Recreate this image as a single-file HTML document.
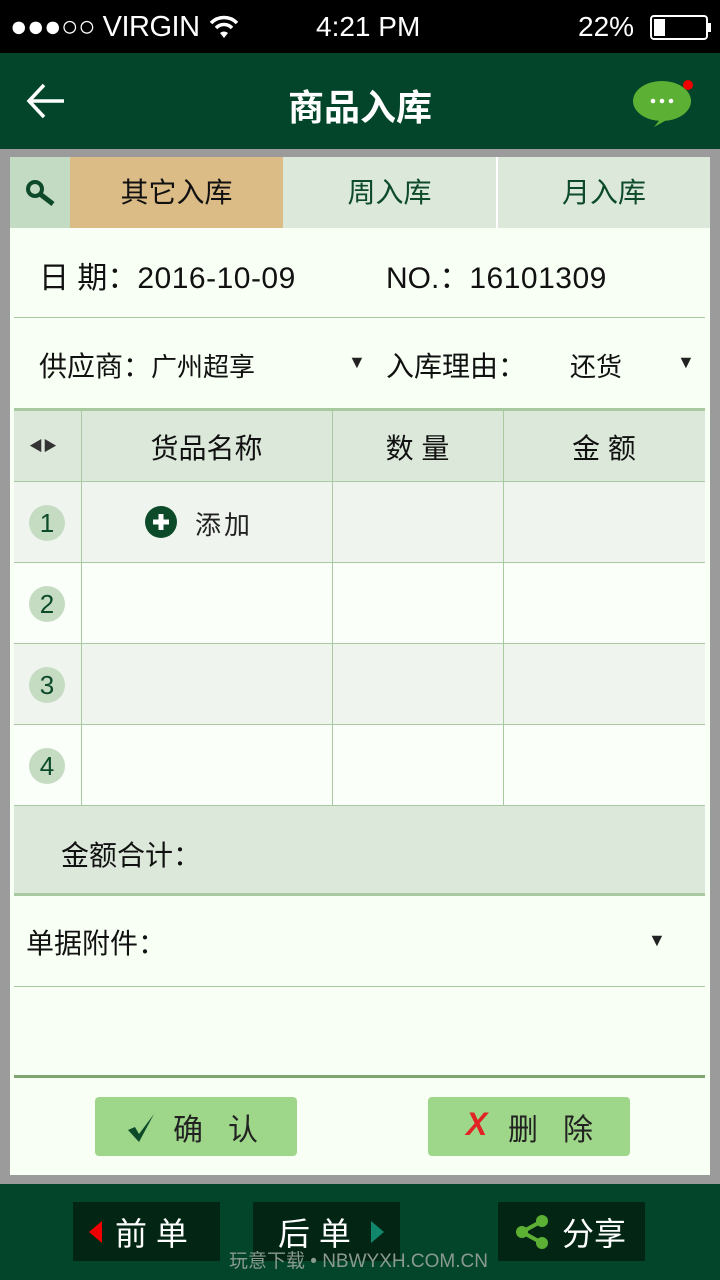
<!DOCTYPE html>
<html><head><meta charset="utf-8"><style>
*{margin:0;padding:0;box-sizing:border-box}
body{width:720px;height:1280px;background:#9b9b9b;font-family:"Liberation Sans","Noto Sans CJK SC",sans-serif;position:relative;overflow:hidden}
.a{position:absolute}
.sb{left:0;top:0;width:720px;height:53px;background:#000;color:#fff;font-size:28px}
.nav{left:0;top:53px;width:720px;height:96px;background:#02452a}
.panel{left:10px;top:157px;width:700px;height:1018px;background:#f8fff4}
.t{font-size:28px;color:#111}
.hl{background:#a9c9a0;height:1px}
.vl{background:#a9c9a0;width:1px}
.num{width:36px;height:36px;border-radius:50%;background:#c5dcc3;color:#0d4a2a;font-size:26px;text-align:center;line-height:36px}
.btn{background:#9fd78a;border-radius:4px;height:59px;width:202px;font-size:30px;color:#222}
.bb{background:#022514;height:59px;width:147px;color:#fff;font-size:32px}
</style></head><body>
<div class="a sb">
 <div class="a" style="left:10px;top:11px;font-size:29px;letter-spacing:-0.5px">●●●○○ VIRGIN</div>
 <svg class="a" style="left:208px;top:14px" width="32" height="26" viewBox="0 0 32 26"><path d="M3 9 A18 18 0 0 1 29 9" stroke="#fff" stroke-width="3.5" fill="none"/><path d="M8 14 A11 11 0 0 1 24 14" stroke="#fff" stroke-width="3.5" fill="none"/><path d="M12 19 L16 24 L20 19 A6 6 0 0 0 12 19Z" fill="#fff"/></svg>
 <div class="a" style="left:316px;top:11px">4:21 PM</div>
 <div class="a" style="left:578px;top:11px">22%</div>
 <div class="a" style="left:650px;top:15px;width:58px;height:25px;border:2px solid #fff;border-radius:4px"><div style="width:11px;height:17px;background:#fff;margin:2px"></div></div>
 <div class="a" style="left:708px;top:23px;width:3px;height:9px;background:#fff"></div>
</div>
<div class="a nav">
 <svg class="a" style="left:26px;top:30px" width="40" height="36" viewBox="0 0 40 36"><path d="M18 2 L3 18 L18 34 M3 18 H38" stroke="#fff" stroke-width="3.5" fill="none"/></svg>
 <div class="a" style="left:0;width:720px;top:26px;text-align:center;color:#fff;font-size:36px;font-weight:bold">商品入库</div>
 <svg class="a" style="left:632px;top:24px" width="62" height="50" viewBox="0 0 62 50"><ellipse cx="30" cy="24" rx="29" ry="20" fill="#5cb135"/><path d="M30 40 L22 50 L40 40Z" fill="#5cb135"/><circle cx="21" cy="24" r="2.3" fill="#fff"/><circle cx="30" cy="24" r="2.3" fill="#fff"/><circle cx="39" cy="24" r="2.3" fill="#fff"/><circle cx="56" cy="8" r="5" fill="#e00"/></svg>
</div>
<div class="a panel"></div>
<div class="a" style="left:10px;top:157px;width:60px;height:71px;background:#c4dbc3"></div>
<svg class="a" style="left:24px;top:178px" width="34" height="30" viewBox="0 0 34 30"><circle cx="11" cy="11" r="7" stroke="#0d4a2a" stroke-width="4" fill="none"/><path d="M16 16 L29 26" stroke="#0d4a2a" stroke-width="5"/></svg>
<div class="a" style="left:70px;top:157px;width:213px;height:71px;background:#dbbb86;text-align:center;line-height:71px;font-size:28px;color:#111">其它入库</div>
<div class="a" style="left:283px;top:157px;width:213px;height:71px;background:#dce9da;text-align:center;line-height:71px;font-size:28px;color:#0d4a2a">周入库</div>
<div class="a" style="left:498px;top:157px;width:212px;height:71px;background:#dce9da;text-align:center;line-height:71px;font-size:28px;color:#0d4a2a">月入库</div>
<div class="a" style="left:496px;top:157px;width:2px;height:71px;background:#fff"></div>

<div class="a t" style="left:39px;top:253px;font-size:30px">日 期：<span style="letter-spacing:0.5px">2016-10-09</span></div>
<div class="a t" style="left:386px;top:253px;font-size:30px">NO.：<span style="letter-spacing:0.5px">16101309</span></div>
<div class="a hl" style="left:14px;top:317px;width:691px"></div>
<div class="a t" style="left:39px;top:345px">供应商：<span style="font-size:26px">广州超享</span></div>
<div class="a" style="left:348px;top:352px;font-size:18px;color:#222">▼</div>
<div class="a t" style="left:386px;top:345px">入库理由：</div>
<div class="a t" style="left:570px;top:347px;font-size:26px">还货</div>
<div class="a" style="left:677px;top:352px;font-size:18px;color:#222">▼</div>

<div class="a" style="left:14px;top:408px;width:691px;height:3px;background:#a9c9a0"></div>
<div class="a" style="left:14px;top:411px;width:691px;height:70px;background:#dce9da"></div>
<div class="a" style="left:14px;top:481px;width:691px;height:81px;background:#eff5ee"></div>
<div class="a" style="left:14px;top:643px;width:691px;height:81px;background:#eff5ee"></div>
<div class="a" style="left:14px;top:562px;width:691px;height:81px;background:#fbfffa"></div>
<div class="a" style="left:14px;top:724px;width:691px;height:81px;background:#fbfffa"></div>
<div class="a hl" style="left:14px;top:481px;width:691px"></div>
<div class="a hl" style="left:14px;top:562px;width:691px"></div>
<div class="a hl" style="left:14px;top:643px;width:691px"></div>
<div class="a hl" style="left:14px;top:724px;width:691px"></div>
<div class="a vl" style="left:81px;top:411px;height:394px"></div>
<div class="a vl" style="left:332px;top:411px;height:394px"></div>
<div class="a vl" style="left:503px;top:411px;height:394px"></div>
<div class="a" style="left:29px;top:436px;font-size:14px;color:#333">◀▶</div>
<div class="a t" style="left:81px;width:251px;top:427px;text-align:center">货品名称</div>
<div class="a t" style="left:332px;width:171px;top:427px;text-align:center">数 量</div>
<div class="a t" style="left:503px;width:202px;top:427px;text-align:center">金 额</div>
<div class="a num" style="left:29px;top:505px">1</div>
<div class="a num" style="left:29px;top:586px">2</div>
<div class="a num" style="left:29px;top:667px">3</div>
<div class="a num" style="left:29px;top:748px">4</div>
<svg class="a" style="left:145px;top:506px" width="32" height="32" viewBox="0 0 32 32"><circle cx="16" cy="16" r="16" fill="#0d4a2a"/><path d="M16 8V24M8 16H24" stroke="#fff" stroke-width="5"/></svg>
<div class="a" style="left:195px;top:505px;font-size:26px;color:#222;letter-spacing:3px">添加</div>

<div class="a" style="left:14px;top:805px;width:691px;height:88px;background:#dce9da;border-top:1px solid #a9c9a0"></div>
<div class="a t" style="left:61px;top:834px">金额合计：</div>
<div class="a" style="left:14px;top:893px;width:691px;height:3px;background:#a9c9a0"></div>
<div class="a t" style="left:26px;top:922px">单据附件：</div>
<div class="a" style="left:648px;top:930px;font-size:18px;color:#222">▼</div>
<div class="a hl" style="left:14px;top:986px;width:691px"></div>
<div class="a" style="left:14px;top:1075px;width:691px;height:3px;background:#7ea56f"></div>

<div class="a btn" style="left:95px;top:1097px">
 <svg class="a" style="left:32px;top:16px" width="28" height="30" viewBox="0 0 28 30"><path d="M1 17 L8 14 L12 21 L27 1 L12 29 Z" fill="#0d4a2a"/></svg>
 <div class="a" style="left:78px;top:8px">确&nbsp;&nbsp;&nbsp;认</div></div>
<div class="a btn" style="left:428px;top:1097px">
 <div class="a" style="left:38px;top:9px;color:#e02424;font-weight:bold;font-style:italic;font-size:32px">X</div>
 <div class="a" style="left:80px;top:8px">删&nbsp;&nbsp;&nbsp;除</div></div>

<div class="a" style="left:0;top:1184px;width:720px;height:96px;background:#02452a"></div>
<div class="a bb" style="left:73px;top:1202px"><div class="a" style="left:16px;top:19px;width:0;height:0;border-top:11px solid transparent;border-bottom:11px solid transparent;border-right:13px solid #e00"></div><div class="a" style="left:42px;top:7px">前 单</div></div>
<div class="a bb" style="left:253px;top:1202px"><div class="a" style="left:25px;top:7px">后 单</div><div class="a" style="left:118px;top:19px;width:0;height:0;border-top:11px solid transparent;border-bottom:11px solid transparent;border-left:13px solid #10876a"></div></div>
<div class="a bb" style="left:498px;top:1202px">
 <svg class="a" style="left:16px;top:13px" width="36" height="34" viewBox="0 0 36 34"><path d="M28 6 L8 17 L28 28" stroke="#5cb135" stroke-width="4" fill="none"/><circle cx="28" cy="6" r="6" fill="#5cb135"/><circle cx="8" cy="17" r="6" fill="#5cb135"/><circle cx="28" cy="28" r="6" fill="#5cb135"/></svg>
 <div class="a" style="left:64px;top:7px">分享</div></div>
<div class="a" style="left:229px;top:1246px;font-size:19px;color:#8a9a8f">玩意下载 • NBWYXH.COM.CN</div>
</body></html>
